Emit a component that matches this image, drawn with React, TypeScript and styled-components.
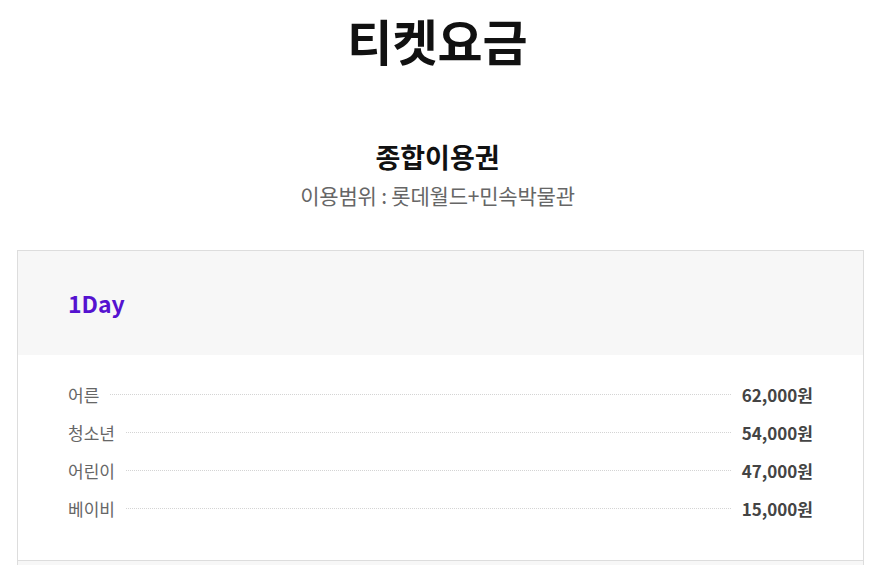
import React from 'react'
import styled, { createGlobalStyle } from 'styled-components'

const GlobalStyle = createGlobalStyle`
    body {
        margin: 0;
        background: #fff;
        font-family: "Noto Sans CJK KR", "Noto Sans", sans-serif;
    }
`

const Page = styled.div`
    width: 875px;
    height: 565px;
    overflow: hidden;
`

const Title = styled.h1`
    margin: 0;
    font-size: 49px;
    line-height: 80px;
    font-weight: 700;
    text-align: center;
    color: #111;
`

const TicketHeading = styled.h2`
    margin: 59px 0 0;
    font-size: 27px;
    line-height: 36px;
    font-weight: 700;
    text-align: center;
    color: #111;
`

const Scope = styled.p`
    margin: 5px 0 0;
    font-size: 21px;
    line-height: 30px;
    letter-spacing: -0.2px;
    text-align: center;
    color: #666;
`

const Card = styled.div`
    margin: 40px 0 0 17px;
    width: 847px;
    border: 1px solid #ddd;
    box-sizing: border-box;
`

const Period = styled.section`
    & + & {
        border-top: 1px solid #ddd;
    }
`

const PeriodHeader = styled.div`
    height: 104px;
    display: flex;
    align-items: center;
    padding: 0 50px;
    background: #f7f7f7;
`

const PeriodName = styled.h3`
    margin: 0;
    font-size: 23px;
    font-weight: 700;
    color: #5512d0;
`

const PriceList = styled.ul`
    list-style: none;
    margin: 0;
    padding: 20px 50px 33px;
`

const PriceRow = styled.li`
    display: flex;
    align-items: center;
    height: 38px;
`

const Label = styled.span`
    font-size: 17px;
    color: #666;
`

const Dots = styled.span`
    flex: 1;
    margin: 0 11px;
    border-top: 1px dotted #d4d4d4;
`

const Price = styled.strong`
    font-size: 17px;
    font-weight: 700;
    color: #444;
`

const periods = [
    {
        name: '1Day',
        prices: [
            ['어른', '62,000원'],
            ['청소년', '54,000원'],
            ['어린이', '47,000원'],
            ['베이비', '15,000원'],
        ],
    },
]

export default function App() {
    return (
        <Page>
            <GlobalStyle />
            <Title>티켓요금</Title>
            <TicketHeading>종합이용권</TicketHeading>
            <Scope>이용범위 : 롯데월드+민속박물관</Scope>
            <Card>
                {periods.map(p => (
                    <Period key={p.name}>
                        <PeriodHeader>
                            <PeriodName>{p.name}</PeriodName>
                        </PeriodHeader>
                        <PriceList>
                            {p.prices.map(([label, price]) => (
                                <PriceRow key={label}>
                                    <Label>{label}</Label>
                                    <Dots />
                                    <Price>{price}</Price>
                                </PriceRow>
                            ))}
                        </PriceList>
                    </Period>
                ))}
                <Period>
                    <PeriodHeader />
                </Period>
            </Card>
        </Page>
    )
}
